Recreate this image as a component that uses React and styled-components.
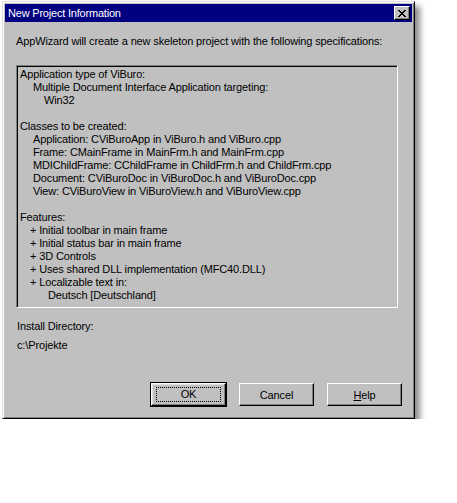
import styled, { createGlobalStyle } from 'styled-components';

const GlobalStyle = createGlobalStyle`
  body {
    margin: 0;
    background: #ffffff;
    font-family: "Liberation Sans", Arial, sans-serif;
    font-size: 11px;
    letter-spacing: -0.14px;
  }
`;

const summary = [
  { text: 'Application type of ViBuro:', indent: 0 },
  { text: 'Multiple Document Interface Application targeting:', indent: 13 },
  { text: 'Win32', indent: 24 },
  { text: '', indent: 0 },
  { text: 'Classes to be created:', indent: 0 },
  { text: 'Application: CViBuroApp in ViBuro.h and ViBuro.cpp', indent: 13 },
  { text: 'Frame: CMainFrame in MainFrm.h and MainFrm.cpp', indent: 13 },
  { text: 'MDIChildFrame: CChildFrame in ChildFrm.h and ChildFrm.cpp', indent: 13 },
  { text: 'Document: CViBuroDoc in ViBuroDoc.h and ViBuroDoc.cpp', indent: 13 },
  { text: 'View: CViBuroView in ViBuroView.h and ViBuroView.cpp', indent: 13 },
  { text: '', indent: 0 },
  { text: 'Features:', indent: 0 },
  { text: '+ Initial toolbar in main frame', indent: 10 },
  { text: '+ Initial status bar in main frame', indent: 10 },
  { text: '+ 3D Controls', indent: 10 },
  { text: '+ Uses shared DLL implementation (MFC40.DLL)', indent: 10 },
  { text: '+ Localizable text in:', indent: 10 },
  { text: 'Deutsch [Deutschland]', indent: 28 },
];

const App = () => {
  return (
    <>
      <GlobalStyle />
      <Window>
        <TitleBar>
          <Title>New Project Information</Title>
          <CloseButton aria-label="Close">
            <svg width="8" height="7" viewBox="0 0 8 7">
              <path d="M0 0h2v1h1v1h2V1h1V0h2v1H7v1H6v1H5v1h1v1h1v1h1v1H6V6H5V5H3v1H2v1H0V6h1V5h1V4h1V3H2V2H1V1H0z" fill="#000" />
            </svg>
          </CloseButton>
        </TitleBar>
        <Body>
          <Intro>AppWizard will create a new skeleton project with the following specifications:</Intro>
          <SummaryBox>
            {summary.map((line, i) => (
              <Line key={i} $indent={line.indent}>
                {line.text || '\u00a0'}
              </Line>
            ))}
          </SummaryBox>
          <Label>Install Directory:</Label>
          <Path>c:\Projekte</Path>
          <ButtonRow>
            <Button $default>
              <Focus>OK</Focus>
            </Button>
            <Button>Cancel</Button>
            <Button>
              <u>H</u>elp
            </Button>
          </ButtonRow>
        </Body>
      </Window>
    </>
  );
};

export default App;

const Window = styled.div`
  margin: 1px 0 0 2px;
  width: 413px;
  height: 418px;
  box-sizing: border-box;
  background: #c0c0c0;
  border: 1px solid;
  border-color: #dfdfdf #000000 #000000 #dfdfdf;
  box-shadow: inset 1px 1px 0 #ffffff, inset -1px -1px 0 #808080,
    5px 5px 6px rgba(0, 0, 0, 0.45);
  padding: 2px;
  display: flex;
  flex-direction: column;
`;

const TitleBar = styled.div`
  height: 18px;
  background: #000080;
  display: flex;
  align-items: center;
  justify-content: space-between;
  padding: 0 2px 0 3px;
`;

const Title = styled.span`
  color: #ffffff;
  font-size: 11px;
  letter-spacing: -0.2px;
`;

const CloseButton = styled.button`
  width: 16px;
  height: 14px;
  padding: 0;
  margin: 0;
  background: #c0c0c0;
  border: 1px solid;
  border-color: #ffffff #000000 #000000 #ffffff;
  box-shadow: inset -1px -1px 0 #808080;
  display: flex;
  align-items: center;
  justify-content: center;
`;

const Body = styled.div`
  flex: 1;
  display: flex;
  flex-direction: column;
  padding: 13px 13px 0 11px;
`;

const Intro = styled.div`
  line-height: 13px;
  height: 13px;
  white-space: nowrap;
`;

const SummaryBox = styled.div`
  margin-top: 17px;
  width: 382px;
  height: 243px;
  box-sizing: border-box;
  border: 1px solid;
  border-color: #808080 #ffffff #ffffff #808080;
  box-shadow: inset 1px 1px 0 #000000;
  padding: 2px 0 0 3px;
`;

const Line = styled.div`
  line-height: 13px;
  height: 13px;
  white-space: nowrap;
  padding-left: ${(p) => p.$indent}px;
`;

const Label = styled.div`
  margin-top: 12px;
  line-height: 13px;
  padding-left: 1px;
`;

const Path = styled.div`
  margin-top: 6px;
  line-height: 13px;
  padding-left: 1px;
`;

const ButtonRow = styled.div`
  margin-top: 31px;
  display: flex;
  justify-content: flex-end;
  gap: 13px;
  margin-right: -3px;
`;

const Button = styled.button`
  width: 75px;
  height: 23px;
  box-sizing: border-box;
  padding: 0;
  margin: 0;
  font-family: "Liberation Sans", Arial, sans-serif;
  font-size: 11px;
  letter-spacing: -0.14px;
  color: #000000;
  background: #c0c0c0;
  border: 1px solid;
  border-color: #ffffff #000000 #000000 #ffffff;
  box-shadow: inset -1px -1px 0 #808080;
  display: flex;
  align-items: center;
  justify-content: center;
  ${(p) =>
    p.$default &&
    `
    outline: 1px solid #000000;
    box-shadow: inset -1px -1px 0 #808080, inset 1px 1px 0 #dfdfdf;
  `}
`;

const Focus = styled.span`
  width: 63px;
  height: 13px;
  line-height: 13px;
  text-align: center;
  border: 1px dotted #000000;
`;
